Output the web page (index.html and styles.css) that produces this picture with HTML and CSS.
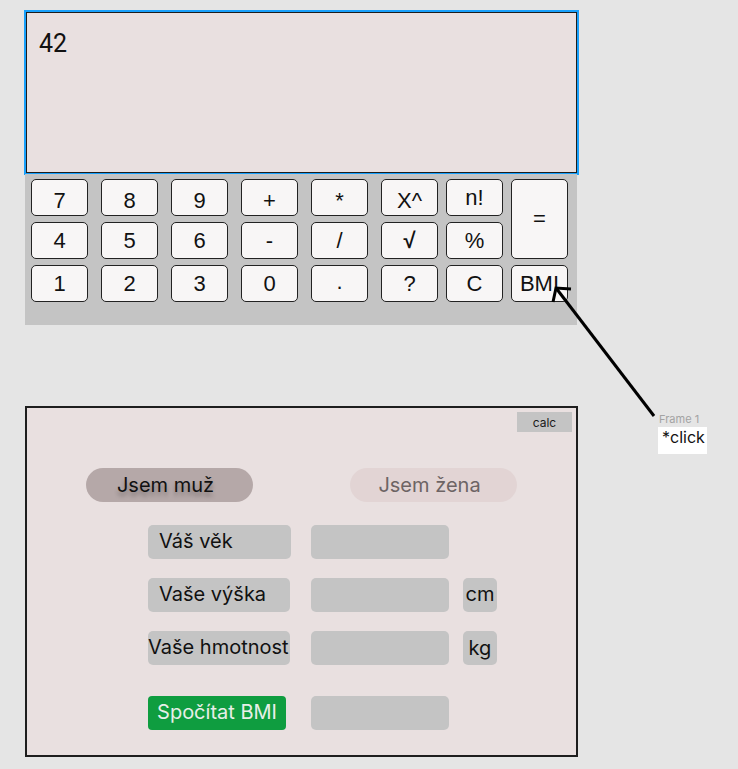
FILE: index.html
```html
<!DOCTYPE html>
<html lang="cs">
<head>
<meta charset="utf-8">
<title>Kalkulačka</title>
<link rel="stylesheet" href="styles.css">
</head>
<body>
<div class="canvas">
  <div class="column">
    <div class="display">42</div>
    <div class="keypad">
      <button class="key dn">7</button>
      <button class="key dn">8</button>
      <button class="key dn">9</button>
      <button class="key dn">+</button>
      <button class="key dn">*</button>
      <button class="key dn">X^</button>
      <button class="key">n!</button>
      <button class="key eq">=</button>
      <button class="key">4</button>
      <button class="key">5</button>
      <button class="key">6</button>
      <button class="key">-</button>
      <button class="key">/</button>
      <button class="key root">√</button>
      <button class="key">%</button>
      <button class="key lo">1</button>
      <button class="key lo">2</button>
      <button class="key lo">3</button>
      <button class="key lo">0</button>
      <button class="key lo dot">.</button>
      <button class="key lo">?</button>
      <button class="key lo">C</button>
      <button class="key lo">BMI</button>
    </div>

    <div class="frame">
      <div class="topbar"><button class="calc">calc</button></div>
      <div class="gender">
        <button class="pill male">Jsem muž</button>
        <button class="pill female">Jsem žena</button>
      </div>
      <div class="form">
        <div class="row r1">
          <div class="lbl pad w143">Váš věk</div>
          <div class="inp"></div>
        </div>
        <div class="row r2">
          <div class="lbl pad">Vaše výška</div>
          <div class="inp"></div>
          <div class="unit">cm</div>
        </div>
        <div class="row r3">
          <div class="lbl">Vaše hmotnost</div>
          <div class="inp"></div>
          <div class="unit kg">kg</div>
        </div>
        <div class="row r4">
          <button class="go">Spočítat BMI</button>
          <div class="inp"></div>
        </div>
      </div>
    </div>
  </div>

  <div class="note">
    <div class="note-title">Frame 1</div>
    <div class="note-box">*click</div>
  </div>

  <svg class="arrow" width="738" height="769" viewBox="0 0 738 769">
    <path d="M654 416 L556 288" stroke="#000" stroke-width="3" fill="none"/>
    <path d="M571 289 L556 288 L553 302" stroke="#000" stroke-width="3" fill="none"/>
  </svg>
</div>
</body>
</html>
```

FILE: styles.css
```css
* { box-sizing: border-box; }

html, body {
  margin: 0;
  padding: 0;
  background: #e5e5e5;
}

.canvas {
  position: relative;
  width: 738px;
  height: 769px;
  overflow: hidden;
}

.column {
  padding: 12px 0 0 25px;
  display: flex;
  flex-direction: column;
  align-items: flex-start;
}

.display {
  margin-left: 1px;
  width: 551px;
  height: 161px;
  background: #e9e0e0;
  border: 1px solid #1d1d1d;
  outline: 2px solid #18a0fb;
  font-family: Roboto, "Liberation Sans", sans-serif;
  font-size: 25px;
  line-height: 25px;
  color: #111;
  padding: 18px 0 0 12px;
}

.keypad {
  margin-top: 1px;
  width: 552px;
  height: 151px;
  background: #c4c4c4;
  padding: 5px 0 0 6px;
  display: grid;
  grid-template-columns: 70px 70px 70px 70px 70px 65px 65px 56px;
  grid-template-rows: 43px 43px 43px;
}

.key {
  width: 57px;
  height: 37px;
  margin: 0;
  padding: 0;
  background: #f8f6f6;
  border: 1px solid #222;
  border-radius: 5px;
  font-family: "Liberation Sans", Arial, sans-serif;
  font-size: 22px;
  color: #111;
  display: flex;
  align-items: center;
  justify-content: center;
  line-height: 1;
}

.key.dn { padding-top: 6px; }
.key.lo { padding-top: 1px; }
.key.dot { padding-bottom: 5px; }
.key.root { font-weight: bold; }

.key.eq {
  grid-column: 8;
  grid-row: 1 / span 2;
  height: 80px;
  width: 57px;
}

.frame {
  margin-top: 81px;
  width: 553px;
  height: 351px;
  background: #e9e0e0;
  border: 2px solid #1e1e1e;
  font-family: Inter, "Noto Sans", sans-serif;
}

.topbar {
  display: flex;
  justify-content: flex-end;
  padding: 4px 4px 0 0;
}

.calc {
  width: 55px;
  height: 20px;
  border: none;
  margin: 0;
  padding: 0;
  background: #c4c4c4;
  font-family: Inter, "Noto Sans", sans-serif;
  font-size: 12px;
  color: #1a1a1a;
}

.gender {
  display: flex;
  margin-top: 36px;
  padding-left: 59px;
  gap: 97px;
}

.pill {
  width: 167px;
  height: 34px;
  border: none;
  margin: 0;
  padding: 0 8px 0 0;
  border-radius: 17px;
  font-family: Inter, "Noto Sans", sans-serif;
  font-size: 20px;
}

.pill.male {
  background: #b5a8a8;
  color: #111;
  text-shadow: 0 4px 4px rgba(0, 0, 0, 0.3);
}

.pill.female {
  background: #e2d4d4;
  color: #6d6464;
}

.form {
  padding-left: 121px;
}

.row {
  display: flex;
  align-items: stretch;
  height: 34px;
}

.r1 { margin-top: 23px; }
.r2 { margin-top: 19px; }
.r3 { margin-top: 19px; }
.r4 { margin-top: 31px; }

.lbl {
  width: 142px;
  margin-right: 21px;
  background: #c4c4c4;
  border-radius: 5px;
  font-size: 20px;
  color: #111;
  display: flex;
  align-items: center;
  white-space: nowrap;
  padding-bottom: 3px;
}

.lbl.pad { padding-left: 11px; }
.lbl.w143 { width: 143px; margin-right: 20px; }

.inp {
  width: 138px;
  margin-right: 14px;
  background: #c4c4c4;
  border-radius: 5px;
}

.unit {
  width: 34px;
  background: #c4c4c4;
  border-radius: 5px;
  font-size: 20px;
  color: #111;
  display: flex;
  align-items: center;
  justify-content: center;
  padding-bottom: 2px;
}

.unit.kg { padding-bottom: 0; }

.go {
  width: 138px;
  margin: 0 25px 0 0;
  padding: 0 0 2px 0;
  border: none;
  border-radius: 4px;
  background: #0f9d40;
  color: #e8efe8;
  font-family: Inter, "Noto Sans", sans-serif;
  font-size: 20px;
}

.note {
  position: absolute;
  left: 658px;
  top: 412px;
  font-family: Inter, "Noto Sans", sans-serif;
}

.note-title {
  font-size: 11px;
  line-height: 14px;
  color: #a3a3a3;
  padding-left: 1px;
}

.note-box {
  margin-top: 1px;
  width: 49px;
  height: 27px;
  background: #fff;
  font-size: 16px;
  color: #111;
  padding: 0 0 0 4px;
  line-height: 20px;
}

.arrow {
  position: absolute;
  left: 0;
  top: 0;
  pointer-events: none;
}
```
